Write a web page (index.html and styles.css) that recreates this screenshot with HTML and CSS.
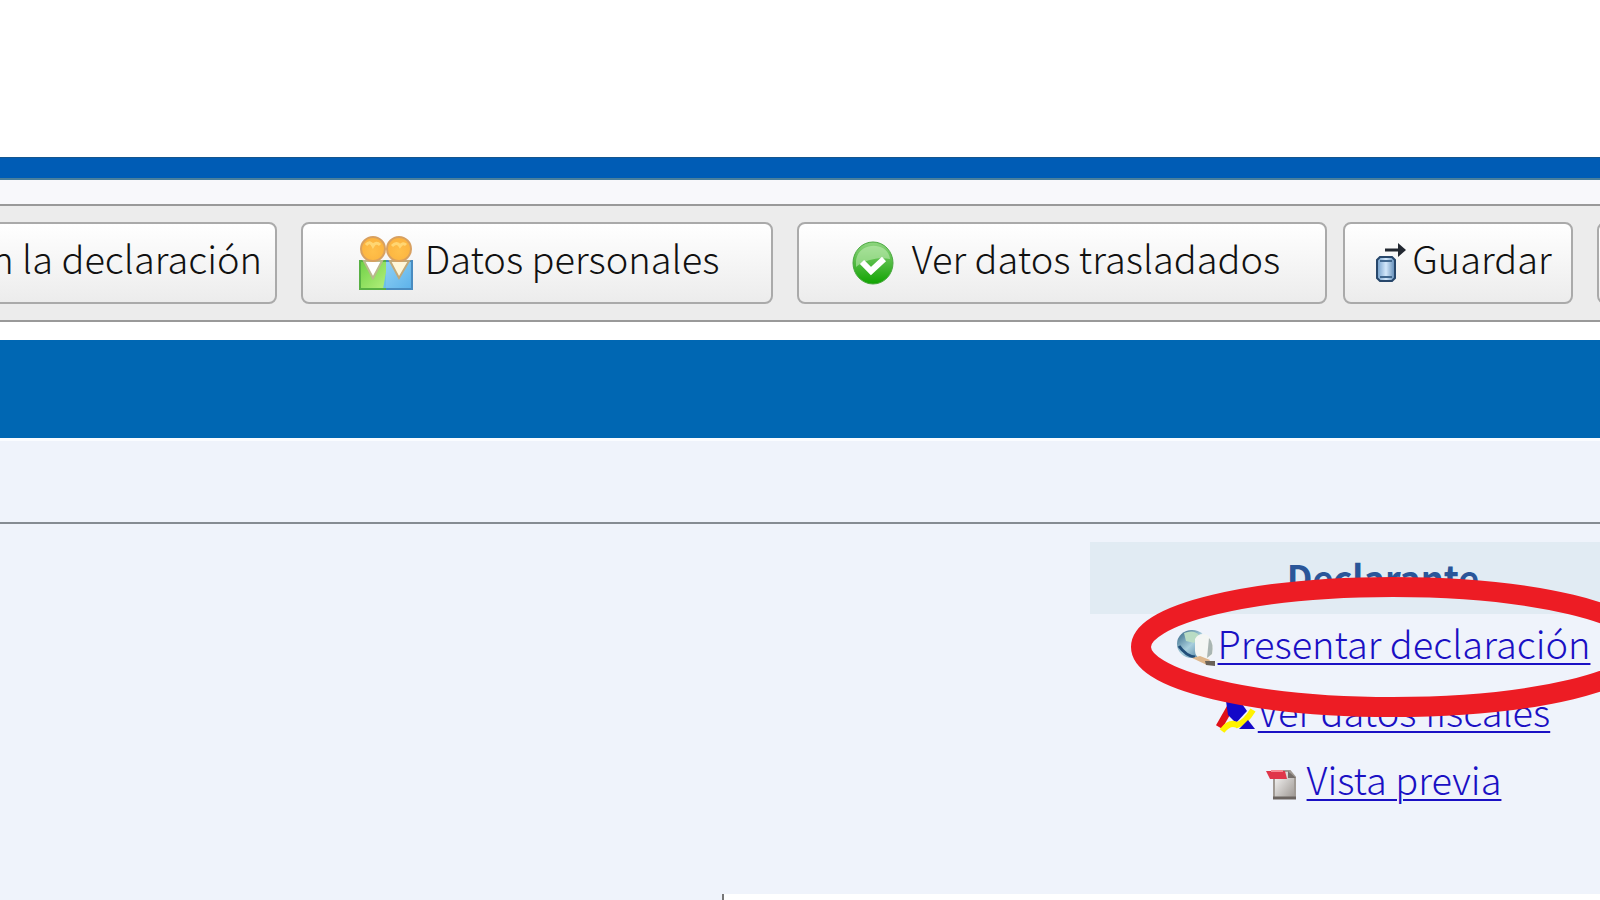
FILE: index.html
```html
<!DOCTYPE html>
<html lang="es">
<head>
  <meta charset="UTF-8">
  <meta name="viewport" content="width=device-width, initial-scale=1.0">
  <title>Declaración</title>
  <link rel="stylesheet" href="styles.css">
</head>
<body>
<header class="top-space"></header>
<div class="stripe"></div>

<!-- Toolbar -->
<nav class="toolbar">
  <button type="button" class="btn btn-continue"><span>n la declaración</span></button>
  <button type="button" class="btn btn-personal">
    <svg class="icon-people" viewBox="0 0 54 54" aria-hidden="true">
      <defs>
        <radialGradient id="head" cx="50%" cy="60%" r="60%">
          <stop offset="0" stop-color="#ffc04a"/>
          <stop offset="1" stop-color="#fbb23e"/>
        </radialGradient>
        <linearGradient id="green" x1="0" y1="0" x2="1" y2="1">
          <stop offset="0" stop-color="#6fd046"/>
          <stop offset="1" stop-color="#b4f07c"/>
        </linearGradient>
        <linearGradient id="blue" x1="0" y1="0" x2="1" y2="1">
          <stop offset="0" stop-color="#8fd0f4"/>
          <stop offset="1" stop-color="#5cb2ea"/>
        </linearGradient>
      </defs>
      <rect x="1" y="25" width="26" height="28" fill="url(#green)"/>
      <rect x="27" y="25" width="26" height="28" fill="url(#blue)"/>
      <path d="M27 25V53H24L27 36Z" fill="#6cc0e8"/>
      <path d="M27 25H1V53H27" fill="none" stroke="#58b044" stroke-width="2"/>
      <path d="M27 25H53V53H27" fill="none" stroke="#4a8cc0" stroke-width="2"/>
      <path d="M5 25H23L14 42Z" fill="#fff" stroke="#b9b98c" stroke-width="2"/>
      <path d="M31 25H50L40 42Z" fill="#fff6d8" stroke="#c0a878" stroke-width="2"/>
      <circle cx="14" cy="13" r="12" fill="url(#head)" stroke="#d8a060" stroke-width="2"/>
      <circle cx="40" cy="13" r="12" fill="url(#head)" stroke="#d8a060" stroke-width="2"/>
      <path d="M7 9q4-5 7 1q3-5 7-1M33 10q5-5 8 0q3-4 6-1" fill="none" stroke="#ffd672" stroke-width="3"/>
    </svg>
    <span>Datos personales</span>
  </button>
  <button type="button" class="btn btn-transfer">
    <svg class="icon-check" viewBox="0 0 42 44" aria-hidden="true">
      <defs>
        <linearGradient id="ball" x1="0" y1="0" x2="0" y2="1">
          <stop offset="0" stop-color="#8fd680"/>
          <stop offset="0.45" stop-color="#58bd48"/>
          <stop offset="1" stop-color="#10a400"/>
        </linearGradient>
      </defs>
      <ellipse cx="21" cy="22" rx="20" ry="21" fill="url(#ball)" stroke="#4aa840" stroke-width="1"/>
      <path d="M4 20C6 0 36 0 38 18C28 16 14 18 4 26Z" fill="#c4efb8" opacity="0.55"/>
      <path d="M10 21L19 30L32 18" fill="none" stroke="#fff" stroke-width="6"/>
    </svg>
    <span>Ver datos trasladados</span>
  </button>
  <button type="button" class="btn btn-save">
    <svg class="icon-save" viewBox="0 0 30 42" aria-hidden="true">
      <defs>
        <linearGradient id="can" x1="0" y1="0" x2="1" y2="0">
          <stop offset="0" stop-color="#6f9cc8"/>
          <stop offset="0.5" stop-color="#d3e8fb"/>
          <stop offset="1" stop-color="#5c88b4"/>
        </linearGradient>
      </defs>
      <path d="M4 15H16L19 18V36L16 39H4L1 36V18Z" fill="url(#can)" stroke="#27476b" stroke-width="2"/>
      <path d="M4 19H16M4 35H16" stroke="#41688f" stroke-width="2"/>
      <path d="M9 8H24" stroke="#222831" stroke-width="3"/>
      <path d="M22 1L30 8L22 15Z" fill="#222831"/>
    </svg>
    <span>Guardar</span>
  </button>
  <button type="button" class="btn btn-more" aria-label="Más"></button>
</nav>

<div class="banner"></div>

<main class="content">
  <div class="content-head"></div>
  <section class="declarant">
    <h2>Declarante</h2>
    <ul>
      <li>
        <svg class="icon-globe" viewBox="0 0 40 38" aria-hidden="true">
          <defs>
            <linearGradient id="globe" x1="0" y1="0" x2="1" y2="1">
              <stop offset="0" stop-color="#2c5f80"/>
              <stop offset="0.5" stop-color="#a8cfdd"/>
              <stop offset="1" stop-color="#3c6f98"/>
            </linearGradient>
          </defs>
          <ellipse cx="16" cy="15" rx="15" ry="14" fill="url(#globe)"/>
          <path d="M8 4Q18 0 23 6L18 14L10 12Z" fill="#b9dcc4"/>
          <path d="M3 17Q10 27 19 28" fill="none" stroke="#1f4c78" stroke-width="3"/>
          <path d="M19 10Q23 3 31 6Q38 10 37 24Q35 31 27 30Q19 29 19 22Z" fill="#f4f6f4"/>
          <path d="M33 9Q38 14 36 25L31 29Z" fill="#a9b5b2"/>
          <path d="M16 29L24 27L34 31L31 36Z" fill="#ddb68c"/>
          <path d="M29 32L39 32V37L30 36Z" fill="#6a6258"/>
        </svg>
        <a href="#">Presentar declaración</a>
      </li>
      <li>
        <svg class="icon-agency" viewBox="0 0 40 38" aria-hidden="true">
          <path d="M3 30L15 9" stroke="#e01018" stroke-width="7"/>
          <path d="M10 4H24L31 14L20 26L12 18Z" fill="#1408c8"/>
          <path d="M6 34Q14 24 21 28Q29 26 37 13" fill="none" stroke="#fff200" stroke-width="6"/>
          <path d="M23 32L32 23L39 32Z" fill="#1408c8"/>
        </svg>
        <a href="#">Ver datos fiscales</a>
      </li>
      <li>
        <svg class="icon-pdf" viewBox="0 0 32 32" aria-hidden="true">
          <defs>
            <linearGradient id="page" x1="0" y1="0" x2="1" y2="1">
              <stop offset="0" stop-color="#fff"/>
              <stop offset="1" stop-color="#9b9590"/>
            </linearGradient>
          </defs>
          <path d="M9 3H25L30 9V30H9Z" fill="url(#page)" stroke="#a09a94" stroke-width="2"/>
          <path d="M23 3V10H31Z" fill="#746d69"/>
          <path d="M8 30H31" stroke="#6b6460" stroke-width="3"/>
          <path d="M1 3H20L22 11H5Z" fill="#e0364a"/>
          <path d="M6 3H18" stroke="#f58a94" stroke-width="2"/>
        </svg>
        <a href="#">Vista previa</a>
      </li>
    </ul>
    <!-- Highlight round the first link -->
    <svg class="highlight" viewBox="0 0 526 142" aria-hidden="true">
      <ellipse cx="263" cy="71" rx="252" ry="60"/>
    </svg>
  </section>
  <div class="sheet"></div>
</main>
</body>
</html>
```
FILE: styles.css
```css
/* General Styles */
* {
  box-sizing: border-box;
}
body {
  font-family: 'Noto Sans CJK SC', 'Open Sans', sans-serif;
  font-size: 38px;
  font-weight: 300;
  line-height: 68px;
  margin: 0;
  height: 100vh;
  display: flex;
  flex-direction: column;
  overflow: hidden;
  background: #fff;
  color: #111;
}
.top-space {
  flex: none;
  height: 157px;
}
.stripe {
  flex: none;
  height: 23px;
  background: #005cb5;
  border-top: 1px solid #14568f;
  border-bottom: 2px solid #4a7f9c;
}
/* Toolbar */
.toolbar {
  flex: none;
  display: flex;
  margin-top: 24px;
  padding: 16px 0;
  background: #ececec;
  border-top: 2px solid #999;
  border-bottom: 2px solid #999;
  box-shadow: 0 -24px 0 #f8f8fb;
}
.btn {
  flex: none;
  display: flex;
  align-items: center;
  justify-content: center;
  height: 82px;
  margin: 0 24px 0 0;
  padding: 0;
  font: inherit;
  color: inherit;
  white-space: nowrap;
  background: linear-gradient(#fff, #ececec);
  border: 2px solid #aaa;
  border-radius: 8px;
  cursor: pointer;
}
.btn span {
  padding-bottom: 10px;
}
.btn-continue {
  width: 297px;
  margin-left: -20px;
  padding-right: 13px;
  justify-content: flex-end;
}
.btn-personal {
  width: 472px;
  padding-left: 4px;
  gap: 12px;
}
.btn-transfer {
  width: 530px;
  margin-right: 16px;
  padding-left: 8px;
  gap: 18px;
}
.btn-save {
  width: 230px;
  padding-left: 12px;
  gap: 6px;
}
.btn-more {
  width: 230px;
}
.icon-people {
  width: 54px;
  height: 54px;
}
.icon-check {
  width: 42px;
  height: 44px;
}
.icon-save {
  width: 30px;
  height: 42px;
}
/* Banner */
.banner {
  flex: none;
  height: 98px;
  margin-top: 18px;
  background: #0067b3;
}
/* Content */
.content {
  flex: 1;
  display: flex;
  flex-direction: column;
  align-items: flex-end;
  background: #eff3fb;
  border-top: 3px solid #fafcff;
  overflow: hidden;
}
.content-head {
  flex: none;
  width: 100%;
  height: 83px;
  border-bottom: 2px solid #858b92;
}
.declarant {
  position: relative;
  flex: none;
  width: 582px;
  margin: 18px -72px 0 0;
  text-align: center;
}
.declarant h2 {
  height: 72px;
  margin: 0;
  padding-left: 4px;
  font-size: 36px;
  font-weight: 700;
  color: #2a5699;
  background: #e1ebf3;
}
.declarant ul {
  margin: 0;
  padding: 0;
  list-style: none;
}
.declarant li {
  display: flex;
  align-items: center;
  justify-content: center;
  gap: 2px;
  height: 68px;
  padding-left: 4px;
}
.declarant a {
  padding-bottom: 10px;
  color: #1a10c4;
  text-decoration-thickness: 2px;
  text-underline-offset: 4px;
}
.icon-globe,
.icon-agency {
  width: 40px;
  height: 38px;
}
.icon-pdf {
  width: 32px;
  height: 32px;
  margin-right: 8px;
}
.highlight {
  position: absolute;
  top: 34px;
  left: 40px;
  width: 526px;
  height: 142px;
  fill: none;
  stroke: #ed1c24;
  stroke-width: 20px;
}
/* Lower sheet */
.sheet {
  flex: none;
  width: calc(100% - 722px);
  height: 200px;
  margin-top: 76px;
  background: #fff;
  border-left: 2px solid #777;
}
```
